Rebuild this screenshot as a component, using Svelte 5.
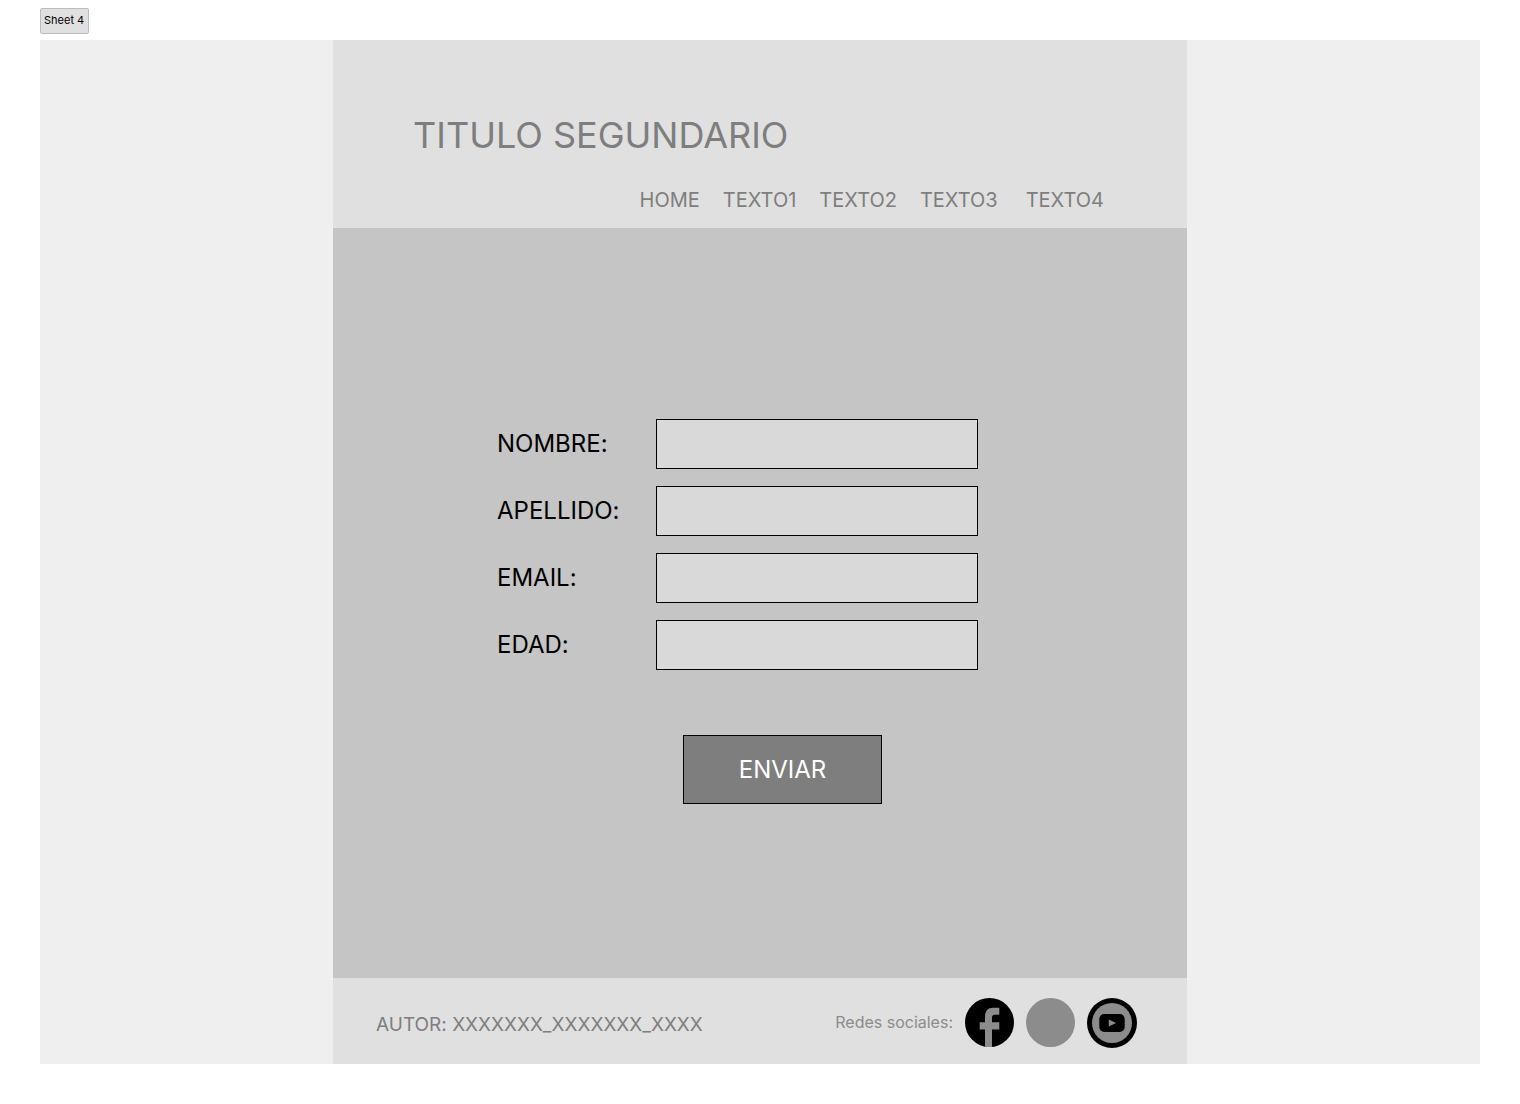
<script>
  const links = ['HOME', 'TEXTO1', 'TEXTO2', 'TEXTO3', 'TEXTO4'];
  const fields = [
    { id: 'nombre', label: 'NOMBRE:', type: 'text' },
    { id: 'apellido', label: 'APELLIDO:', type: 'text' },
    { id: 'email', label: 'EMAIL:', type: 'email' },
    { id: 'edad', label: 'EDAD:', type: 'text' }
  ];
</script>

<div class="sheet">
  <button class="tab" type="button">Sheet 4</button>
  <div class="canvas">
    <div class="page">
      <header>
        <h1>TITULO SEGUNDARIO</h1>
        <nav>
          {#each links as link}
            <a href="#{link.toLowerCase()}">{link}</a>
          {/each}
        </nav>
      </header>
      <main>
        <form>
          {#each fields as field}
            <div class="row">
              <label for={field.id}>{field.label}</label>
              <input id={field.id} type={field.type} />
            </div>
          {/each}
          <button class="send" type="button">ENVIAR</button>
        </form>
      </main>
      <footer>
        <p class="author">AUTOR: XXXXXXX_XXXXXXX_XXXX</p>
        <div class="social">
          <span>Redes sociales:</span>
          <a href="#facebook" aria-label="Facebook">
            <svg width="49" height="49" viewBox="0 0 49 49">
              <circle cx="24.5" cy="24.5" r="24.5" fill="#000" />
              <path d="M20 49V31.500h-5.300v-7.300H20v-5.200C20 13 23 9.800 28 9.800h6.300v7H30c-2.200 0-3 1-3 3v4.400h7.300v7.300H27V49z" fill="#8c8c8c" />
            </svg>
          </a>
          <a href="#red" aria-label="Red social">
            <svg width="49" height="49" viewBox="0 0 49 49">
              <circle cx="24.5" cy="24.5" r="24.5" fill="#8c8c8c" />
            </svg>
          </a>
          <a href="#youtube" aria-label="YouTube">
            <svg width="50" height="50" viewBox="0 0 50 50">
              <circle cx="25" cy="25" r="25" fill="#000" />
              <circle cx="25" cy="25" r="20" fill="#8c8c8c" />
              <rect x="12.300" y="16" width="25.400" height="18" rx="5" fill="#000" />
              <path d="M21.800 21.600v6.800l7.200-3.400z" fill="#8c8c8c" />
            </svg>
          </a>
        </div>
      </footer>
    </div>
  </div>
</div>

<style>
  :global(body) {
    margin: 0;
    background: #fff;
    font-family: Inter, sans-serif;
    font-feature-settings: 'calt' 0;
  }
  .sheet {
    box-sizing: border-box;
    padding: 8px 40px 40px;
  }
  a {
    color: inherit;
    text-decoration: none;
  }
  .tab {
    display: block;
    box-sizing: border-box;
    height: 26px;
    margin: 0 0 6px;
    padding: 0 4px 2px 3px;
    border: 1px solid #bdbdbd;
    border-radius: 2px;
    background: #e0e0e0;
    color: #000;
    font: 11px/22px Inter, sans-serif;
  }
  .canvas {
    display: flex;
    justify-content: center;
    background: #efefef;
  }
  .page {
    flex: 0 1 854px;
    background: #e0e0e0;
    color: #7e7e7e;
  }
  header {
    padding: 73px 80px 14px;
  }
  h1 {
    margin: 0 0 29px;
    font-size: 36px;
    line-height: 44px;
    font-weight: 400;
  }
  nav {
    display: flex;
    justify-content: flex-end;
    gap: 23px;
    padding-right: 3px;
    font-size: 20px;
    line-height: 28px;
  }
  nav a:last-child {
    margin-left: 5px;
  }
  main {
    padding: 191px 164px 174px;
    background: #c5c5c5;
  }
  form {
    display: flex;
    flex-direction: column;
    gap: 17px;
    color: #000;
    font-size: 24px;
  }
  .row {
    display: grid;
    grid-template-columns: 159px minmax(0, 322px);
    align-items: center;
  }
  label {
    padding-bottom: 2px;
  }
  input {
    box-sizing: border-box;
    width: 100%;
    height: 50px;
    padding: 0 12px;
    border: 1px solid #000;
    border-radius: 0;
    background: #d9d9d9;
    font: inherit;
  }
  .send {
    box-sizing: border-box;
    width: 199px;
    height: 69px;
    margin: 48px 0 0 186px;
    border: 1px solid #000;
    background: #7e7e7e;
    color: #fff;
    font: inherit;
  }
  footer {
    display: flex;
    justify-content: space-between;
    align-items: flex-start;
    padding: 20px 50px 16px 43px;
  }
  .author {
    margin: 0;
    padding-top: 15px;
    font-size: 19px;
    line-height: 24px;
  }
  .social {
    display: flex;
    align-items: flex-start;
    gap: 12px;
    font-size: 16px;
    line-height: 49px;
    color: #8c8c8c;
  }
  svg {
    display: block;
  }
</style>
